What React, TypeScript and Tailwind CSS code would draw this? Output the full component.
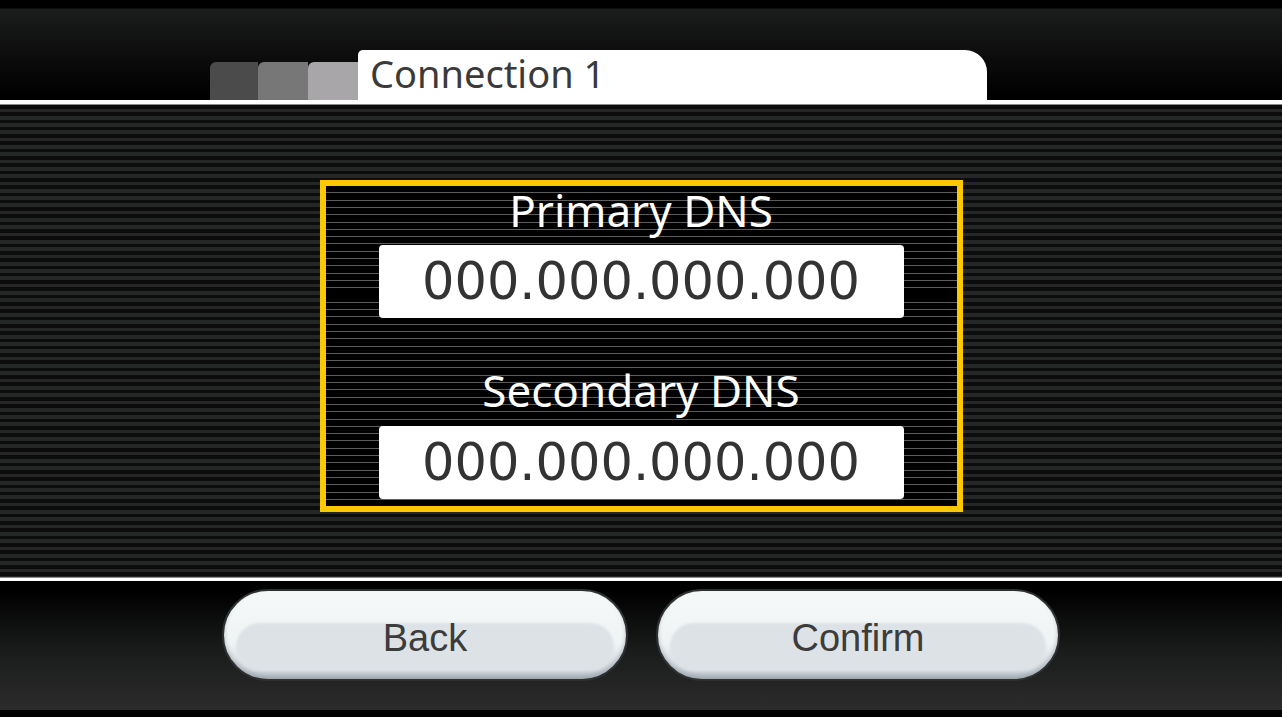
export default function App() {
  const label = { fontFamily: '"Noto Sans", "Open Sans", sans-serif' }
  const digits = { fontFamily: '"DejaVu Sans", "Noto Sans", sans-serif' }
  const btn = { fontFamily: '"Liberation Sans", Arial, sans-serif' }

  return (
    <div className="w-full h-[717px] flex flex-col bg-black overflow-hidden">
      {/* Header with tabs */}
      <div className="h-[100px] flex items-end pl-[210px] bg-[linear-gradient(to_bottom,#000_0px,#000_8px,#1b1d1c_9px,#0c0d0c_55px,#000_95px)]">
        <div className="w-[48px] h-[38px] bg-[#4b4b4b] rounded-tl-[6px]" />
        <div className="w-[50px] h-[38px] bg-[#777777] rounded-tl-[6px]" />
        <div className="w-[50px] h-[38px] bg-[#a8a6a8] rounded-tl-[6px]" />
        <div className="w-[629px] h-[50px] bg-white rounded-tl-[5px] rounded-tr-[22px] pl-[12px] pb-[4px] flex items-center">
          <span className="text-[38px] leading-none text-[#3a3a3a]" style={label}>
            Connection 1
          </span>
        </div>
      </div>
      <div className="h-[4px] bg-white" />
      <div className="h-[1px] bg-[#8a8a8a]" />

      {/* Striped main area */}
      <div className="h-[472px] flex justify-center pt-[75px] bg-[repeating-linear-gradient(to_bottom,#0b0c0b_0px,#0b0c0b_3.6px,#242725_3.6px,#242725_7.3px)]">
        <div className="w-[643px] h-[332px] border-[6px] border-[#fcc800] flex flex-col items-center bg-[repeating-linear-gradient(to_bottom,#000_0px,#000_6.3px,#5c5c5c_6.3px,#5c5c5c_7.3px)]">
          <div className="text-[44px] leading-[48px] text-white" style={label}>
            Primary DNS
          </div>
          <div className="mt-[11px] w-[525px] h-[73px] bg-white rounded-[4px] flex items-center justify-center">
            <span className="text-[51px] leading-none text-[#333333]" style={digits}>
              000.000.000.000
            </span>
          </div>
          <div className="mt-[48px] text-[44px] leading-[48px] text-white" style={label}>
            Secondary DNS
          </div>
          <div className="mt-[12px] w-[525px] h-[73px] bg-white rounded-[4px] flex items-center justify-center">
            <span className="text-[51px] leading-none text-[#333333]" style={digits}>
              000.000.000.000
            </span>
          </div>
        </div>
      </div>

      <div className="h-[1px] bg-[#8a8a8a]" />
      <div className="h-[3px] bg-white" />

      {/* Bottom buttons */}
      <div className="h-[129px] flex justify-center items-start gap-[28px] pt-[8px] bg-[linear-gradient(to_bottom,#000_0px,#000_10px,#1a1c1b_70px,#2b2b2b_128px)]">
        {['Back', 'Confirm'].map((t, i) => (
          <button
            key={t}
            className={`${i === 0 ? 'w-[406px]' : 'w-[404px]'} relative h-[92px] rounded-full border-[2px] border-[#2e3032] bg-[linear-gradient(to_bottom,#f5f9f8_0%,#eff3f4_60%,#d4dae0_88%,#b9c1c9_100%)] shadow-[inset_0_-3px_4px_rgba(120,130,140,0.45)] flex items-center justify-center overflow-hidden`}
          >
            {/* inner body below the gloss */}
            <div className="absolute left-[12px] right-[12px] top-[32px] bottom-[8px] rounded-full bg-[#dde2e6] blur-[1px]" />
            <span className="relative text-[38px] leading-none text-[#3c3c3c] pt-[6px]" style={btn}>
              {t}
            </span>
          </button>
        ))}
      </div>
      <div className="h-[7px] bg-black" />
    </div>
  )
}
